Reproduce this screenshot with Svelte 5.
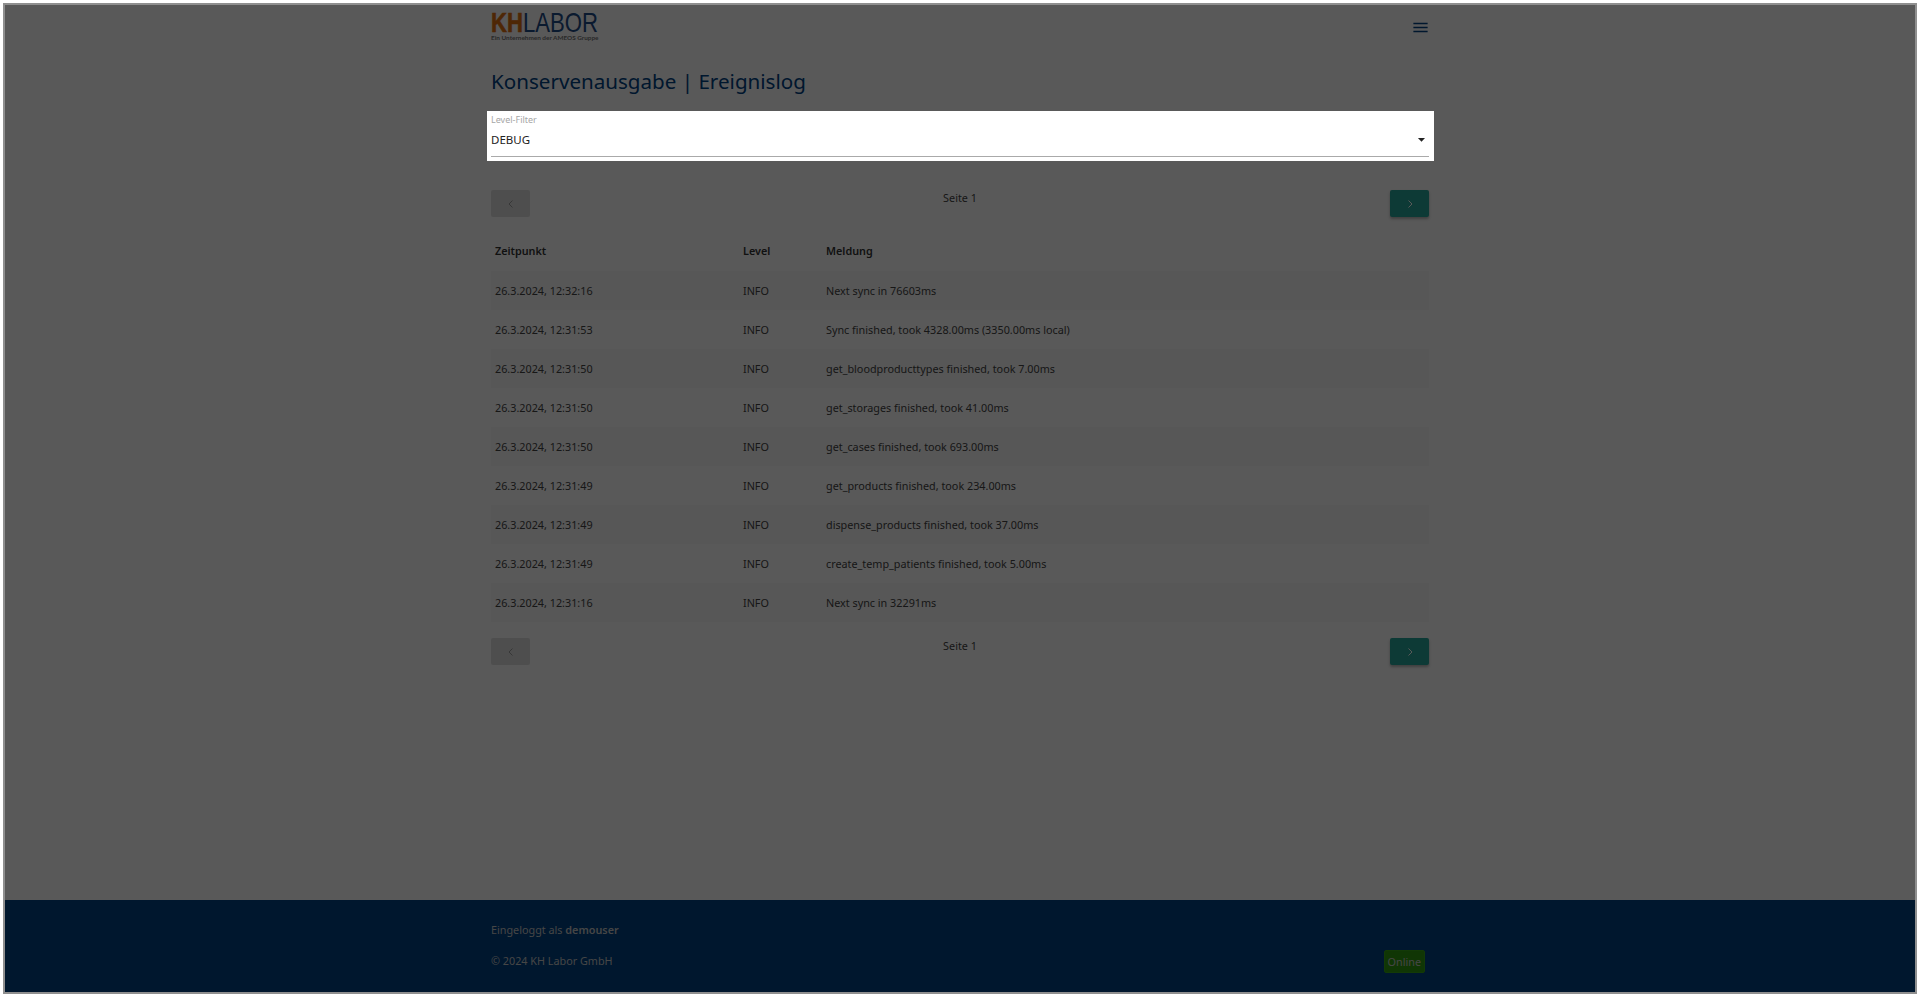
<script>
    const rows = [
        ['26.3.2024, 12:32:16', 'INFO', 'Next sync in 76603ms'],
        ['26.3.2024, 12:31:53', 'INFO', 'Sync finished, took 4328.00ms (3350.00ms local)'],
        ['26.3.2024, 12:31:50', 'INFO', 'get_bloodproducttypes finished, took 7.00ms'],
        ['26.3.2024, 12:31:50', 'INFO', 'get_storages finished, took 41.00ms'],
        ['26.3.2024, 12:31:50', 'INFO', 'get_cases finished, took 693.00ms'],
        ['26.3.2024, 12:31:49', 'INFO', 'get_products finished, took 234.00ms'],
        ['26.3.2024, 12:31:49', 'INFO', 'dispense_products finished, took 37.00ms'],
        ['26.3.2024, 12:31:49', 'INFO', 'create_temp_patients finished, took 5.00ms'],
        ['26.3.2024, 12:31:16', 'INFO', 'Next sync in 32291ms']
    ];
</script>

{#snippet pager()}
    <div class="pager">
        <button class="page-btn prev" aria-label="Zurück">
            <svg width="12" height="12" viewBox="0 0 12 12"><path d="M7.5 2.5 4 6l3.5 3.5" /></svg>
        </button>
        <span class="page-label">Seite 1</span>
        <button class="page-btn next" aria-label="Weiter">
            <svg width="12" height="12" viewBox="0 0 12 12"><path d="M4.5 2.5 8 6l-3.5 3.5" /></svg>
        </button>
    </div>
{/snippet}

<div class="page">
    <main class="container">
        <header class="topbar">
            <div class="logo">
                <div class="logo-name"><b>KH</b><span>LABOR</span></div>
                <div class="logo-sub">Ein Unternehmen der AMEOS Gruppe</div>
            </div>
            <svg class="menu" width="19" height="19" viewBox="0 0 24 24"><path d="M3 18h18v-2H3v2zm0-5h18v-2H3v2zm0-7v2h18V6H3z" /></svg>
        </header>

        <h1>Konservenausgabe | Ereignislog</h1>

        <div class="filter">
            <span class="filter-label">Level-Filter</span>
            <div class="filter-value">
                <span>DEBUG</span>
                <svg width="17" height="17" viewBox="0 0 24 24"><path d="M7 10l5 5 5-5z" /></svg>
            </div>
        </div>

        {@render pager()}

        <table>
            <thead>
                <tr><th class="col-time">Zeitpunkt</th><th class="col-level">Level</th><th>Meldung</th></tr>
            </thead>
            <tbody>
                {#each rows as row}
                    <tr><td>{row[0]}</td><td>{row[1]}</td><td>{row[2]}</td></tr>
                {/each}
            </tbody>
        </table>

        {@render pager()}
    </main>

    <footer>
        <div class="footer-inner">
            <div class="footer-text">
                <p>Eingeloggt als <b>demouser</b></p>
                <p>© 2024 KH Labor GmbH</p>
            </div>
            <span class="status">Online</span>
        </div>
    </footer>

    <div class="overlay"></div>
</div>

<style>
    :global(body) {
        margin: 0;
        background: #fff;
    }

    .page {
        position: relative;
        box-sizing: border-box;
        height: 998px;
        padding: 5px 5px 6px 5px;
        display: flex;
        flex-direction: column;
        font-family: "Noto Sans", sans-serif;
        font-size: 10.8px;
        color: #444;
        background: #fff;
    }

    .overlay {
        position: absolute;
        inset: 3px 3px 4px 3px;
        border: 2px solid #8f8f8f;
        background: rgba(0, 0, 0, 0.65);
        z-index: 1;
    }

    .container {
        box-sizing: border-box;
        width: 938px;
        margin: 0 auto;
        flex: 1;
    }

    .topbar {
        display: flex;
        justify-content: space-between;
        align-items: flex-start;
        height: 46px;
        padding-top: 7px;
        box-sizing: border-box;
    }

    .logo {
        width: 110px;
    }

    .logo-name {
        font-family: "Liberation Sans", sans-serif;
        font-size: 28px;
        height: 21px;
        line-height: 21px;
        color: #1d4a86;
        white-space: nowrap;
        transform: scaleX(0.79);
        transform-origin: left center;
    }

    .logo-name b {
        color: #e06f10;
        font-weight: 700;
        -webkit-text-stroke: 0.6px #e06f10;
    }

    .logo-sub {
        margin-top: 1px;
        font-family: Lato, sans-serif;
        font-size: 6.4px;
        line-height: 8px;
        font-weight: 700;
        color: #777;
        white-space: nowrap;
    }

    .menu {
        fill: #004283;
        margin: 6px -1px 0 0;
    }

    h1 {
        margin: 14px 0 14px;
        font-size: 20.6px;
        line-height: 32px;
        font-weight: 400;
        color: #004283;
    }

    .filter {
        position: relative;
        z-index: 2;
        box-sizing: border-box;
        width: 947px;
        height: 50px;
        margin-left: -4px;
        padding: 4px 5px 0 4px;
        background: #fff;
    }

    .filter-label {
        display: block;
        font-size: 9px;
        line-height: 10px;
        color: #a6a6a6;
    }

    .filter-value {
        display: flex;
        justify-content: space-between;
        align-items: center;
        height: 32px;
        padding-bottom: 3px;
        box-sizing: border-box;
        border-bottom: 1px solid #aaa;
        font-size: 11.5px;
        color: #222;
    }

    .filter-value svg {
        fill: #222;
        margin-right: -1px;
    }

    .pager {
        display: flex;
        justify-content: space-between;
        align-items: flex-start;
        margin-top: 29px;
    }

    .page-btn {
        width: 39px;
        height: 27px;
        padding: 0;
        border: 0;
        border-radius: 2px;
        display: flex;
        align-items: center;
        justify-content: center;
    }

    .page-btn svg {
        fill: none;
        stroke-width: 1;
    }

    .prev {
        background: #dfdfdf;
    }

    .prev svg {
        stroke: #9f9f9f;
    }

    .next {
        background: #26a69a;
        box-shadow: 0 2px 3px rgba(0, 0, 0, 0.3);
    }

    .next svg {
        stroke: #fff;
    }

    .page-label {
        margin-top: -2px;
        line-height: 20px;
    }

    table {
        width: 100%;
        margin-top: 13px;
        border-collapse: collapse;
    }

    th {
        text-align: left;
        font-weight: 600;
        height: 41px;
        padding: 0 4px;
        color: #333;
    }

    td {
        height: 39px;
        padding: 0 4px;
    }

    .col-time {
        width: 240px;
    }

    .col-level {
        width: 75px;
    }

    tbody tr:nth-child(odd) {
        background: #f8f8f8;
    }

    .pager:last-child {
        margin-top: 16px;
    }

    footer {
        height: 92px;
        background: #004283;
        color: #c8c8c8;
    }

    .footer-inner {
        box-sizing: border-box;
        width: 938px;
        height: 100%;
        margin: 0 auto;
        display: flex;
        justify-content: space-between;
        align-items: flex-end;
        padding: 0 4px 19px 0;
    }

    .footer-text b {
        font-weight: 600;
    }

    .footer-text p {
        margin: 0;
        line-height: 20px;
    }

    .footer-text p + p {
        margin: 11px 0 2px;
    }

    .status {
        box-sizing: border-box;
        height: 23px;
        padding: 0 3px;
        line-height: 21px;
        border: 1px solid #37a515;
        border-radius: 2px;
        background: #2f9a10;
    }
</style>
